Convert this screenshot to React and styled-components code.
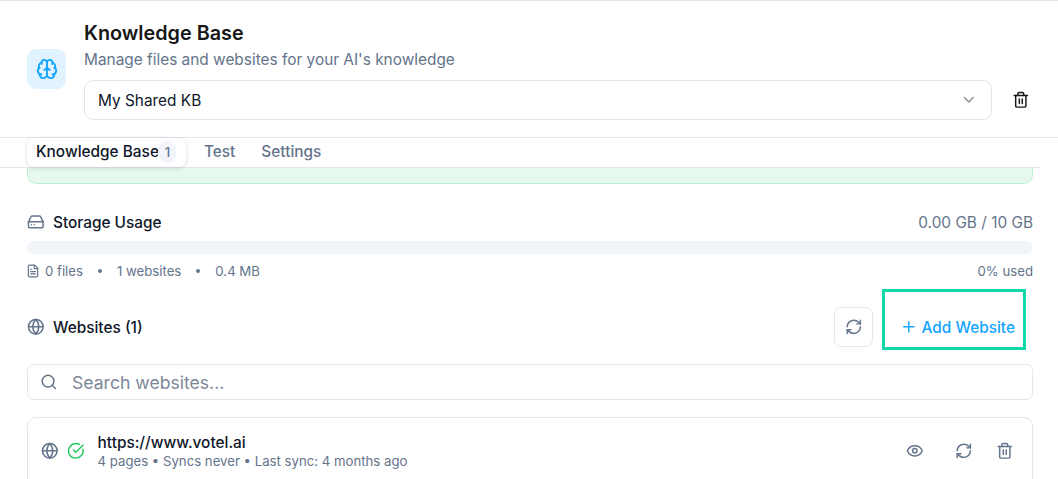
import styled, { createGlobalStyle } from 'styled-components';
import { Brain, ChevronDown, CircleCheckBig, Eye, FileText, Globe, HardDrive, Plus, RefreshCw, Search, Trash2 } from 'lucide-react';

const Global = createGlobalStyle`
  html, body {
    margin:0;
    padding:0;
    background:#fff;
    overflow:hidden;
  }
  * {
    box-sizing:border-box;
  }
  body {
    font-family:Inter, "Liberation Sans", sans-serif;
    color:#0f172a;
  }
`;

const Page = styled.div`
  width:1058px;
  height:479px;
  overflow:hidden;
  border-top:1px solid #e2e8f0;
`;

const Header = styled.header`
  height:137px;
  padding:19px 27px 0 27px;
  display:flex;
  gap:18px;
  align-items:flex-start;
  border-bottom:1px solid #e2e8f0;
`;

const IconBox = styled.div`
  width:39px;
  height:40px;
  margin-top:29px;
  border-radius:9px;
  background:#e1f3ff;
  color:#14a5ff;
  display:flex;
  align-items:center;
  justify-content:center;
  flex-shrink:0;
`;

const HeaderBody = styled.div`
  flex:1;
`;

const Title = styled.h1`
  margin:0;
  font-size:19.8px;
  line-height:26px;
  font-weight:600;
  color:#171717;
`;

const Subtitle = styled.p`
  margin:3px 0 0;
  font-size:15.4px;
  line-height:22px;
  color:#64748b;
`;

const SelectRow = styled.div`
  margin-top:9px;
  display:flex;
  align-items:center;
  gap:19px;
`;

const Select = styled.div`
  flex:1;
  height:40px;
  padding:0 13px 0 13px;
  border:1px solid #e2e8f0;
  border-radius:9px;
  display:flex;
  align-items:center;
  justify-content:space-between;
  font-size:15.4px;
  color:#0f172a;
`;

const IconButton = styled.button`
  width:20px;
  height:20px;
  padding:0;
  border:0;
  background:none;
  color:${p => p.$color || '#171717'};
  display:flex;
  align-items:center;
  justify-content:center;
`;

const Tabs = styled.nav`
  height:30px;
  padding-left:27px;
  display:flex;
  align-items:stretch;
  position:relative;
  border-bottom:1px solid #e2e8f0;
  width:1041px;
`;

const Tab = styled.div`
  display:flex;
  align-items:center;
  padding:0 9px 2px;
  margin-right:${p => p.$active ? '9px' : '8px'};
  font-size:15.4px;
  font-weight:500;
  color:${p => p.$active ? '#0f172a' : '#64748b'};
  background:${p => p.$active ? '#fff' : 'transparent'};
  border-radius:7px;
  box-shadow:${p => p.$active ? '0 1px 4px rgba(15,23,42,.16)' : 'none'};
  height:${p => p.$active ? '29px' : 'auto'};
`;

const Count = styled.span`
  width:19px;
  height:22px;
  margin-left:-1px;
  border-radius:50%;
  background:#f1f5f9;
  color:#64748b;
  font-size:13.2px;
  display:flex;
  align-items:center;
  justify-content:center;
`;

const Content = styled.main`
  padding:0 25px 0 27px;
`;

const Notice = styled.div`
  height:16px;
  background:#e7f9ee;
  border:1px solid #bbf2cf;
  border-top:0;
  border-radius:0 0 9px 9px;
`;

const SpaceRow = styled.div`
  margin-top:${p => p.$top || 0}px;
  display:flex;
  align-items:center;
  justify-content:space-between;
  height:${p => p.$height || 20}px;
`;

const Heading = styled.div`
  display:flex;
  align-items:center;
  gap:8.4px;
  font-size:15.4px;
  font-weight:500;
  color:#0f172a;
  svg {
    color:#64748b;
  }
`;

const Amount = styled.span`
  font-size:15.4px;
  color:#64748b;
`;

const Bar = styled.div`
  margin-top:9px;
  height:13px;
  border-radius:7px;
  background:#f1f5f9;
  overflow:hidden;
`;

const Fill = styled.div`
  height:100%;
  background:#14a5ff;
`;

const Stats = styled.div`
  display:flex;
  align-items:center;
  font-size:13.2px;
  color:#64748b;
  svg {
    margin:0 5px 0 -1px;
  }
`;

const Dot = styled.span`
  width:4px;
  height:4px;
  margin:0 15px;
  border-radius:50%;
  background:#64748b;
`;

const Actions = styled.div`
  display:flex;
  align-items:center;
  gap:9px;
  margin-right:7px;
`;

const RefreshButton = styled.button`
  width:39px;
  height:40px;
  padding:0;
  border:1px solid #e2e8f0;
  border-radius:7px;
  background:#fff;
  color:#64748b;
  display:flex;
  align-items:center;
  justify-content:center;
`;

const AddWrap = styled.div`
  position:relative;
  width:144px;
  height:40px;
`;

const AddButton = styled.button`
  width:100%;
  height:100%;
  padding:0 11px 0 0;
  border:0;
  background:none;
  color:#14a5ff;
  font-family:inherit;
  font-size:15.4px;
  font-weight:500;
  display:flex;
  align-items:center;
  justify-content:flex-end;
  gap:4.4px;
`;

const Highlight = styled.div`
  position:absolute;
  left:0;
  top:-18px;
  width:144px;
  height:61px;
  border:3px solid #0fd9a8;
  pointer-events:none;
`;

const SearchBox = styled.div`
  margin-top:17px;
  height:36px;
  padding:0 12px;
  border:1px solid #e2e8f0;
  border-radius:7px;
  display:flex;
  align-items:center;
  gap:14.4px;
  color:#64748b;
  font-size:17.6px;
  span {
    color:#7c8798;
  }
`;

const Card = styled.div`
  margin-top:17px;
  height:90px;
  padding:15px 17px 0 13px;
  border:1px solid #e2e8f0;
  border-radius:9px;
  display:flex;
  align-items:flex-start;
`;

const CardIcons = styled.div`
  display:flex;
  align-items:center;
  gap:8.4px;
  margin-top:9px;
  color:#64748b;
`;

const CardText = styled.div`
  margin-left:13px;
  flex:1;
`;

const Url = styled.div`
  font-size:15.4px;
  line-height:20px;
  font-weight:500;
  color:#0f172a;
`;

const Meta = styled.div`
  margin-top:-1px;
  font-size:13.2px;
  line-height:18px;
  color:#64748b;
`;

const CardActions = styled.div`
  display:flex;
  align-items:center;
  gap:29px;
  margin-top:8px;
`;

const CardActionsTight = styled.div`
  display:flex;
  align-items:center;
  gap:21px;
`;

const App = () => {
  return <Page>
    <Global />
    <Header>
      <IconBox><Brain size={22} /></IconBox>
      <HeaderBody>
        <Title>Knowledge Base</Title>
        <Subtitle>Manage files and websites for your AI's knowledge</Subtitle>
        <SelectRow>
          <Select>
            My Shared KB
            <ChevronDown size={17.6} color="#8a8f98" />
          </Select>
          <IconButton><Trash2 size={17.6} /></IconButton>
        </SelectRow>
      </HeaderBody>
    </Header>
    <Tabs>
      <Tab $active>Knowledge Base<Count>1</Count></Tab>
      <Tab>Test</Tab>
      <Tab>Settings</Tab>
    </Tabs>
    <Content>
      <Notice />
      <SpaceRow $top={28}>
        <Heading><HardDrive size={17.6} />Storage Usage</Heading>
        <Amount>0.00 GB / 10 GB</Amount>
      </SpaceRow>
      <Bar><Fill style={{ width: '0%' }} /></Bar>
      <SpaceRow $top={7}>
        <Stats>
          <FileText size={14} />0 files<Dot />1 websites<Dot />0.4 MB
        </Stats>
        <Stats>0% used</Stats>
      </SpaceRow>
      <SpaceRow $top={26} $height={40}>
        <Heading><Globe size={17.6} />Websites (1)</Heading>
        <Actions>
          <RefreshButton><RefreshCw size={17.6} /></RefreshButton>
          <AddWrap>
            <AddButton><Plus size={17.6} />Add Website</AddButton>
            <Highlight />
          </AddWrap>
        </Actions>
      </SpaceRow>
      <SearchBox><Search size={17.6} /><span>Search websites...</span></SearchBox>
      <Card>
        <CardIcons>
          <Globe size={17.6} />
          <CircleCheckBig size={17.6} color="#22c55e" />
        </CardIcons>
        <CardText>
          <Url>https://www.votel.ai</Url>
          <Meta>4 pages • Syncs never • Last sync: 4 months ago</Meta>
        </CardText>
        <CardActions>
          <IconButton $color="#64748b"><Eye size={17.6} /></IconButton>
          <CardActionsTight>
            <IconButton $color="#64748b"><RefreshCw size={17.6} /></IconButton>
            <IconButton $color="#64748b"><Trash2 size={17.6} /></IconButton>
          </CardActionsTight>
        </CardActions>
      </Card>
    </Content>
  </Page>
}

export default App;
